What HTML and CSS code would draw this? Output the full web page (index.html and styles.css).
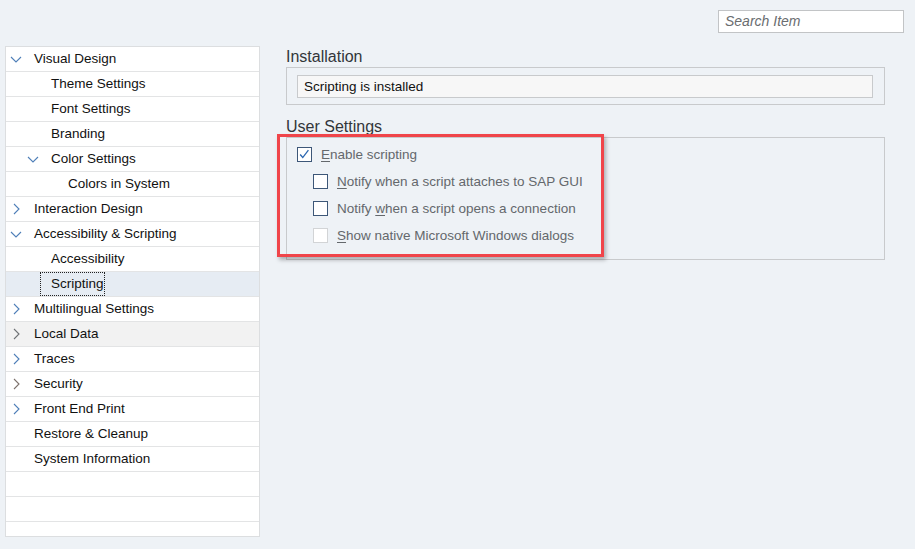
FILE: index.html
```html
<!DOCTYPE html>
<html>
<head>
<meta charset="utf-8">
<link rel="stylesheet" href="styles.css">
</head>
<body>
<div class="topbar">
  <div class="search">Search Item</div>
</div>
<div class="main">
  <div class="tree">
    <div class="row l0"><span class="tw"><svg viewBox="0 0 16 16" width="16" height="16"><polyline points="3,6 8,11 13,6" class="chev blue"/></svg></span><span class="txt">Visual Design</span></div>
    <div class="row l1"><span class="tw"></span><span class="txt">Theme Settings</span></div>
    <div class="row l1"><span class="tw"></span><span class="txt">Font Settings</span></div>
    <div class="row l1"><span class="tw"></span><span class="txt">Branding</span></div>
    <div class="row l1"><span class="tw"><svg viewBox="0 0 16 16" width="16" height="16"><polyline points="3,6 8,11 13,6" class="chev blue"/></svg></span><span class="txt">Color Settings</span></div>
    <div class="row l2"><span class="tw"></span><span class="txt">Colors in System</span></div>
    <div class="row l0"><span class="tw"><svg viewBox="0 0 16 16" width="16" height="16"><polyline points="6,3 11,8 6,13" class="chev blue"/></svg></span><span class="txt">Interaction Design</span></div>
    <div class="row l0"><span class="tw"><svg viewBox="0 0 16 16" width="16" height="16"><polyline points="3,6 8,11 13,6" class="chev blue"/></svg></span><span class="txt">Accessibility &amp; Scripting</span></div>
    <div class="row l1"><span class="tw"></span><span class="txt">Accessibility</span></div>
    <div class="row l1 selected"><span class="tw"></span><span class="txt focus">Scripting</span></div>
    <div class="row l0"><span class="tw"><svg viewBox="0 0 16 16" width="16" height="16"><polyline points="6,3 11,8 6,13" class="chev blue"/></svg></span><span class="txt">Multilingual Settings</span></div>
    <div class="row l0 hover"><span class="tw"><svg viewBox="0 0 16 16" width="16" height="16"><polyline points="6,3 11,8 6,13" class="chev gray"/></svg></span><span class="txt">Local Data</span></div>
    <div class="row l0"><span class="tw"><svg viewBox="0 0 16 16" width="16" height="16"><polyline points="6,3 11,8 6,13" class="chev blue"/></svg></span><span class="txt">Traces</span></div>
    <div class="row l0"><span class="tw"><svg viewBox="0 0 16 16" width="16" height="16"><polyline points="6,3 11,8 6,13" class="chev brown"/></svg></span><span class="txt">Security</span></div>
    <div class="row l0"><span class="tw"><svg viewBox="0 0 16 16" width="16" height="16"><polyline points="6,3 11,8 6,13" class="chev blue"/></svg></span><span class="txt">Front End Print</span></div>
    <div class="row l0"><span class="tw"></span><span class="txt">Restore &amp; Cleanup</span></div>
    <div class="row l0"><span class="tw"></span><span class="txt">System Information</span></div>
    <div class="row"></div>
    <div class="row"></div>
    <div class="row"></div>
  </div>
  <div class="content">
    <div class="heading">Installation</div>
    <div class="group install">
      <div class="field">Scripting is installed</div>
    </div>
    <div class="heading second">User Settings</div>
    <div class="group user">
      <label class="check">
        <span class="box on"><svg viewBox="0 0 15 15" width="13" height="13"><polyline points="2.5,7.5 5.5,11 12,2.5" class="tick"/></svg></span>
        <span class="lbl"><u>E</u>nable scripting</span>
      </label>
      <label class="check sub">
        <span class="box"></span>
        <span class="lbl"><u>N</u>otify when a script attaches to SAP GUI</span>
      </label>
      <label class="check sub">
        <span class="box"></span>
        <span class="lbl">Notify <u>w</u>hen a script opens a connection</span>
      </label>
      <label class="check sub">
        <span class="box disabled"></span>
        <span class="lbl"><u>S</u>how native Microsoft Windows dialogs</span>
      </label>
      <div class="highlight"></div>
    </div>
  </div>
</div>
</body>
</html>
```
FILE: styles.css
```css
html, body {
  margin: 0;
  padding: 0;
}
body {
  background: #eef2f6;
  font-family: "Liberation Sans", Arial, sans-serif;
  font-size: 13.5px;
  color: #1a1a1a;
  width: 915px;
  height: 549px;
  overflow: hidden;
}
.topbar {
  height: 45px;
  display: flex;
  justify-content: flex-end;
  align-items: flex-start;
  padding-right: 11px;
  box-sizing: border-box;
}
.search {
  margin-top: 10px;
  width: 186px;
  height: 23px;
  box-sizing: border-box;
  background: #fff;
  border: 1px solid #c2c4c6;
  font-style: italic;
  font-size: 14px;
  color: #6a6d70;
  padding: 0 0 0 6px;
  line-height: 21px;
}
.main {
  display: flex;
  align-items: flex-start;
  padding-left: 5px;
}
.tree {
  margin-top: 1px;
  width: 255px;
  height: 491px;
  box-sizing: border-box;
  background: #fff;
  border: 1px solid #dcdee0;
  overflow: hidden;
}
.row {
  height: 25px;
  box-sizing: border-box;
  border-bottom: 1px solid #e3e4e5;
  display: flex;
  align-items: center;
  padding-left: 2px;
  color: #111;
}
.row.l1 { padding-left: 19px; }
.row.l2 { padding-left: 36px; }
.row.selected { background: #e6ecf3; }
.row.hover { background: #f2f2f2; }
.tw {
  width: 16px;
  height: 16px;
  margin-right: 10px;
  flex: none;
  display: flex;
}
.txt {
  white-space: nowrap;
  line-height: 24px;
}
.txt.focus {
  margin-left: -11px;
  padding-left: 10px;
  border: 1px dotted #222;
  height: 24px;
  box-sizing: border-box;
  line-height: 22px;
  padding-right: 0;
}
.chev {
  fill: none;
  stroke-width: 1.1;
}
.chev.blue { stroke: #4f7fb8; }
.chev.gray { stroke: #6f7275; }
.chev.brown { stroke: #7d726c; }
.content {
  margin-left: 26px;
  width: 599px;
}
.heading {
  height: 22px;
  line-height: 23px;
  font-size: 16px;
  color: #32363a;
}
.heading.second {
  margin-top: 10px;
}
.group {
  border: 1px solid #c8cacc;
  box-sizing: border-box;
  position: relative;
}
.install {
  height: 38px;
  padding: 7px 11px 0 10px;
}
.field {
  height: 23px;
  box-sizing: border-box;
  background: #f7f7f7;
  border: 1px solid #c8cacc;
  line-height: 21px;
  padding-left: 6px;
  color: #111;
  font-size: 13.5px;
}
.user {
  height: 123px;
  padding: 3px 10px 0 10px;
}
.check {
  display: flex;
  align-items: center;
  height: 27px;
  color: #64686c;
  font-size: 13.5px;
}
.check.sub {
  padding-left: 16px;
}
.box {
  width: 15px;
  height: 15px;
  box-sizing: border-box;
  border: 1px solid #3d5778;
  background: #fff;
  margin-right: 9px;
  display: flex;
  align-items: center;
  justify-content: center;
  flex: none;
}
.box.disabled {
  border-color: #d2d4d6;
}
.tick {
  fill: none;
  stroke: #2a66b0;
  stroke-width: 1.5;
}
.lbl u {
  text-decoration-thickness: 1px;
  text-underline-offset: 2px;
}
.highlight {
  position: absolute;
  left: -10px;
  top: -4px;
  width: 327px;
  height: 123px;
  box-sizing: border-box;
  border: 3px solid #f0454a;
  box-shadow: 2px 3px 4px rgba(0,0,0,0.28);
  pointer-events: none;
}
```
